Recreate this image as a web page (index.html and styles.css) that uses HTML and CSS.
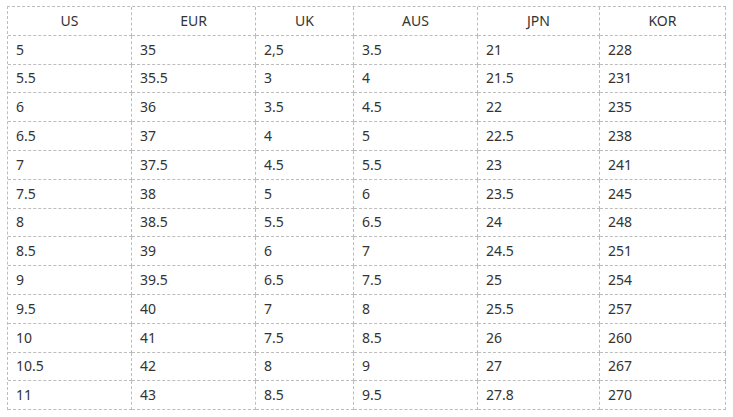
FILE: index.html
```html
<!DOCTYPE html>
<html lang="en">
<head>
<meta charset="utf-8">
<title>Size chart</title>
<link rel="stylesheet" href="styles.css">
</head>
<body>
<table class="size-table">
  <colgroup>
    <col class="c-us"><col class="c-eur"><col class="c-uk"><col class="c-aus"><col class="c-jpn"><col class="c-kor">
  </colgroup>
  <thead>
    <tr><th>US</th><th>EUR</th><th>UK</th><th>AUS</th><th>JPN</th><th>KOR</th></tr>
  </thead>
  <tbody>
    <tr><td>5</td><td>35</td><td>2,5</td><td>3.5</td><td>21</td><td>228</td></tr>
    <tr><td>5.5</td><td>35.5</td><td>3</td><td>4</td><td>21.5</td><td>231</td></tr>
    <tr><td>6</td><td>36</td><td>3.5</td><td>4.5</td><td>22</td><td>235</td></tr>
    <tr><td>6.5</td><td>37</td><td>4</td><td>5</td><td>22.5</td><td>238</td></tr>
    <tr><td>7</td><td>37.5</td><td>4.5</td><td>5.5</td><td>23</td><td>241</td></tr>
    <tr><td>7.5</td><td>38</td><td>5</td><td>6</td><td>23.5</td><td>245</td></tr>
    <tr><td>8</td><td>38.5</td><td>5.5</td><td>6.5</td><td>24</td><td>248</td></tr>
    <tr><td>8.5</td><td>39</td><td>6</td><td>7</td><td>24.5</td><td>251</td></tr>
    <tr><td>9</td><td>39.5</td><td>6.5</td><td>7.5</td><td>25</td><td>254</td></tr>
    <tr><td>9.5</td><td>40</td><td>7</td><td>8</td><td>25.5</td><td>257</td></tr>
    <tr><td>10</td><td>41</td><td>7.5</td><td>8.5</td><td>26</td><td>260</td></tr>
    <tr><td>10.5</td><td>42</td><td>8</td><td>9</td><td>27</td><td>267</td></tr>
    <tr><td>11</td><td>43</td><td>8.5</td><td>9.5</td><td>27.8</td><td>270</td></tr>
  </tbody>
</table>
</body>
</html>
```
FILE: styles.css
```css
html, body {
  margin: 0;
  padding: 0;
  background: #fff;
}
body {
  padding: 6px 0 0 7px;
  font-family: "Noto Sans", "Open Sans", sans-serif;
  font-size: 14px;
  color: #333;
}
.size-table {
  border-collapse: separate;
  border-spacing: 0;
  table-layout: fixed;
  width: 719px;
  border-top: 1px dashed #bdbdbd;
  border-left: 1px dashed #bdbdbd;
}
.c-us { width: 124px; }
.c-eur { width: 124px; }
.c-uk { width: 98px; }
.c-aus { width: 124px; }
.c-jpn { width: 122px; }
.c-kor { width: 126px; }
.size-table th,
.size-table td {
  box-sizing: border-box;
  height: 28.8px;
  padding: 0 8px;
  border-right: 1px dashed #bdbdbd;
  border-bottom: 1px dashed #bdbdbd;
  line-height: 20px;
  vertical-align: middle;
  font-weight: normal;
  white-space: nowrap;
}
.size-table th {
  text-align: center;
}
.size-table td {
  text-align: left;
}
```
